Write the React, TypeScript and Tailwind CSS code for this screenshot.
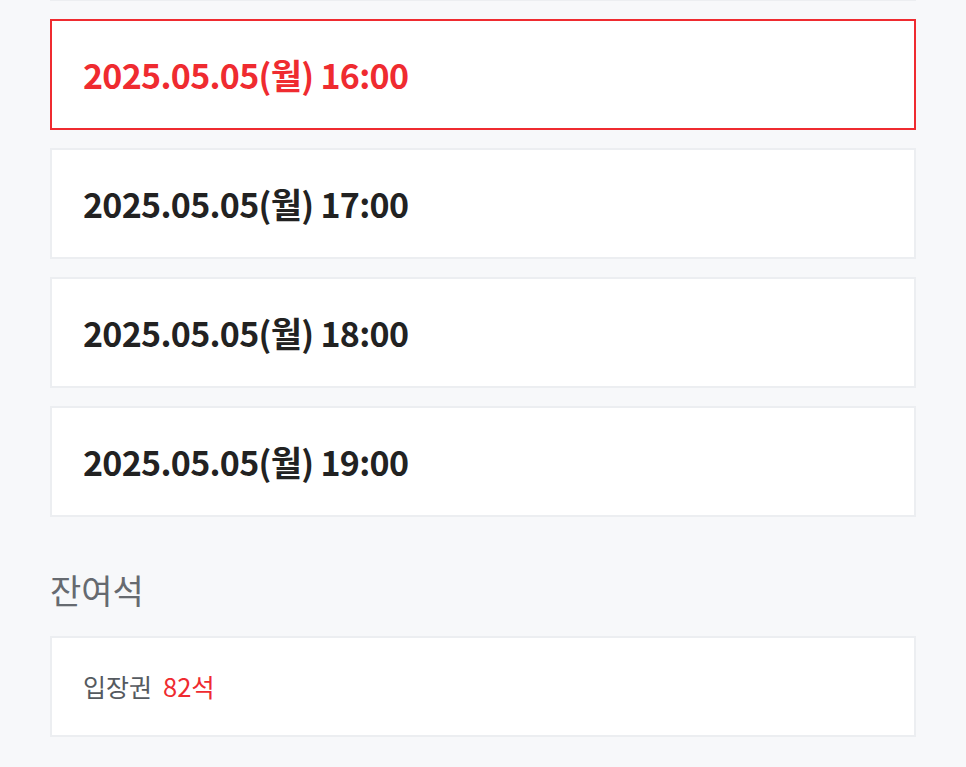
import React from 'react';

const times = ['16:00', '17:00', '18:00', '19:00'];

const font = { fontFamily: '"Noto Sans CJK KR", "Noto Sans", sans-serif' };

export default function App() {
  const selected = '16:00';

  return (
    <div className="min-h-[767px] bg-[#f7f8fa] px-[50px] overflow-hidden" style={font}>
      {/* previous card, cut off at top */}
      <div className="-mt-[111px] h-[112px] bg-white border-2 border-[#eceef1]" />

      <div className="mt-[18px] flex flex-col gap-[18px]">
        {times.map((t) => {
          const active = t === selected;
          return (
            <div
              key={t}
              className={`h-[111px] flex items-center pl-[31px] bg-white border-2 ${
                active ? 'border-[#ef2b30]' : 'border-[#eceef1]'
              }`}
            >
              <span
                className={`text-[34px] font-bold tracking-[-0.7px] ${
                  active ? 'text-[#ef2b30]' : 'text-[#222222]'
                }`}
              >
                2025.05.05(월) {t}
              </span>
            </div>
          );
        })}
      </div>

      {/* remaining seats */}
      <div className="mt-[56px] text-[34px] text-[#666a70] leading-none">잔여석</div>
      <div className="mt-[29px] h-[101px] flex items-center pl-[31px] bg-white border-2 border-[#eceef1]">
        <span className="text-[25px] text-[#555a60]">입장권</span>
        <span className="ml-[11px] text-[25.5px] text-[#ef2b30]">82석</span>
      </div>
    </div>
  );
}
